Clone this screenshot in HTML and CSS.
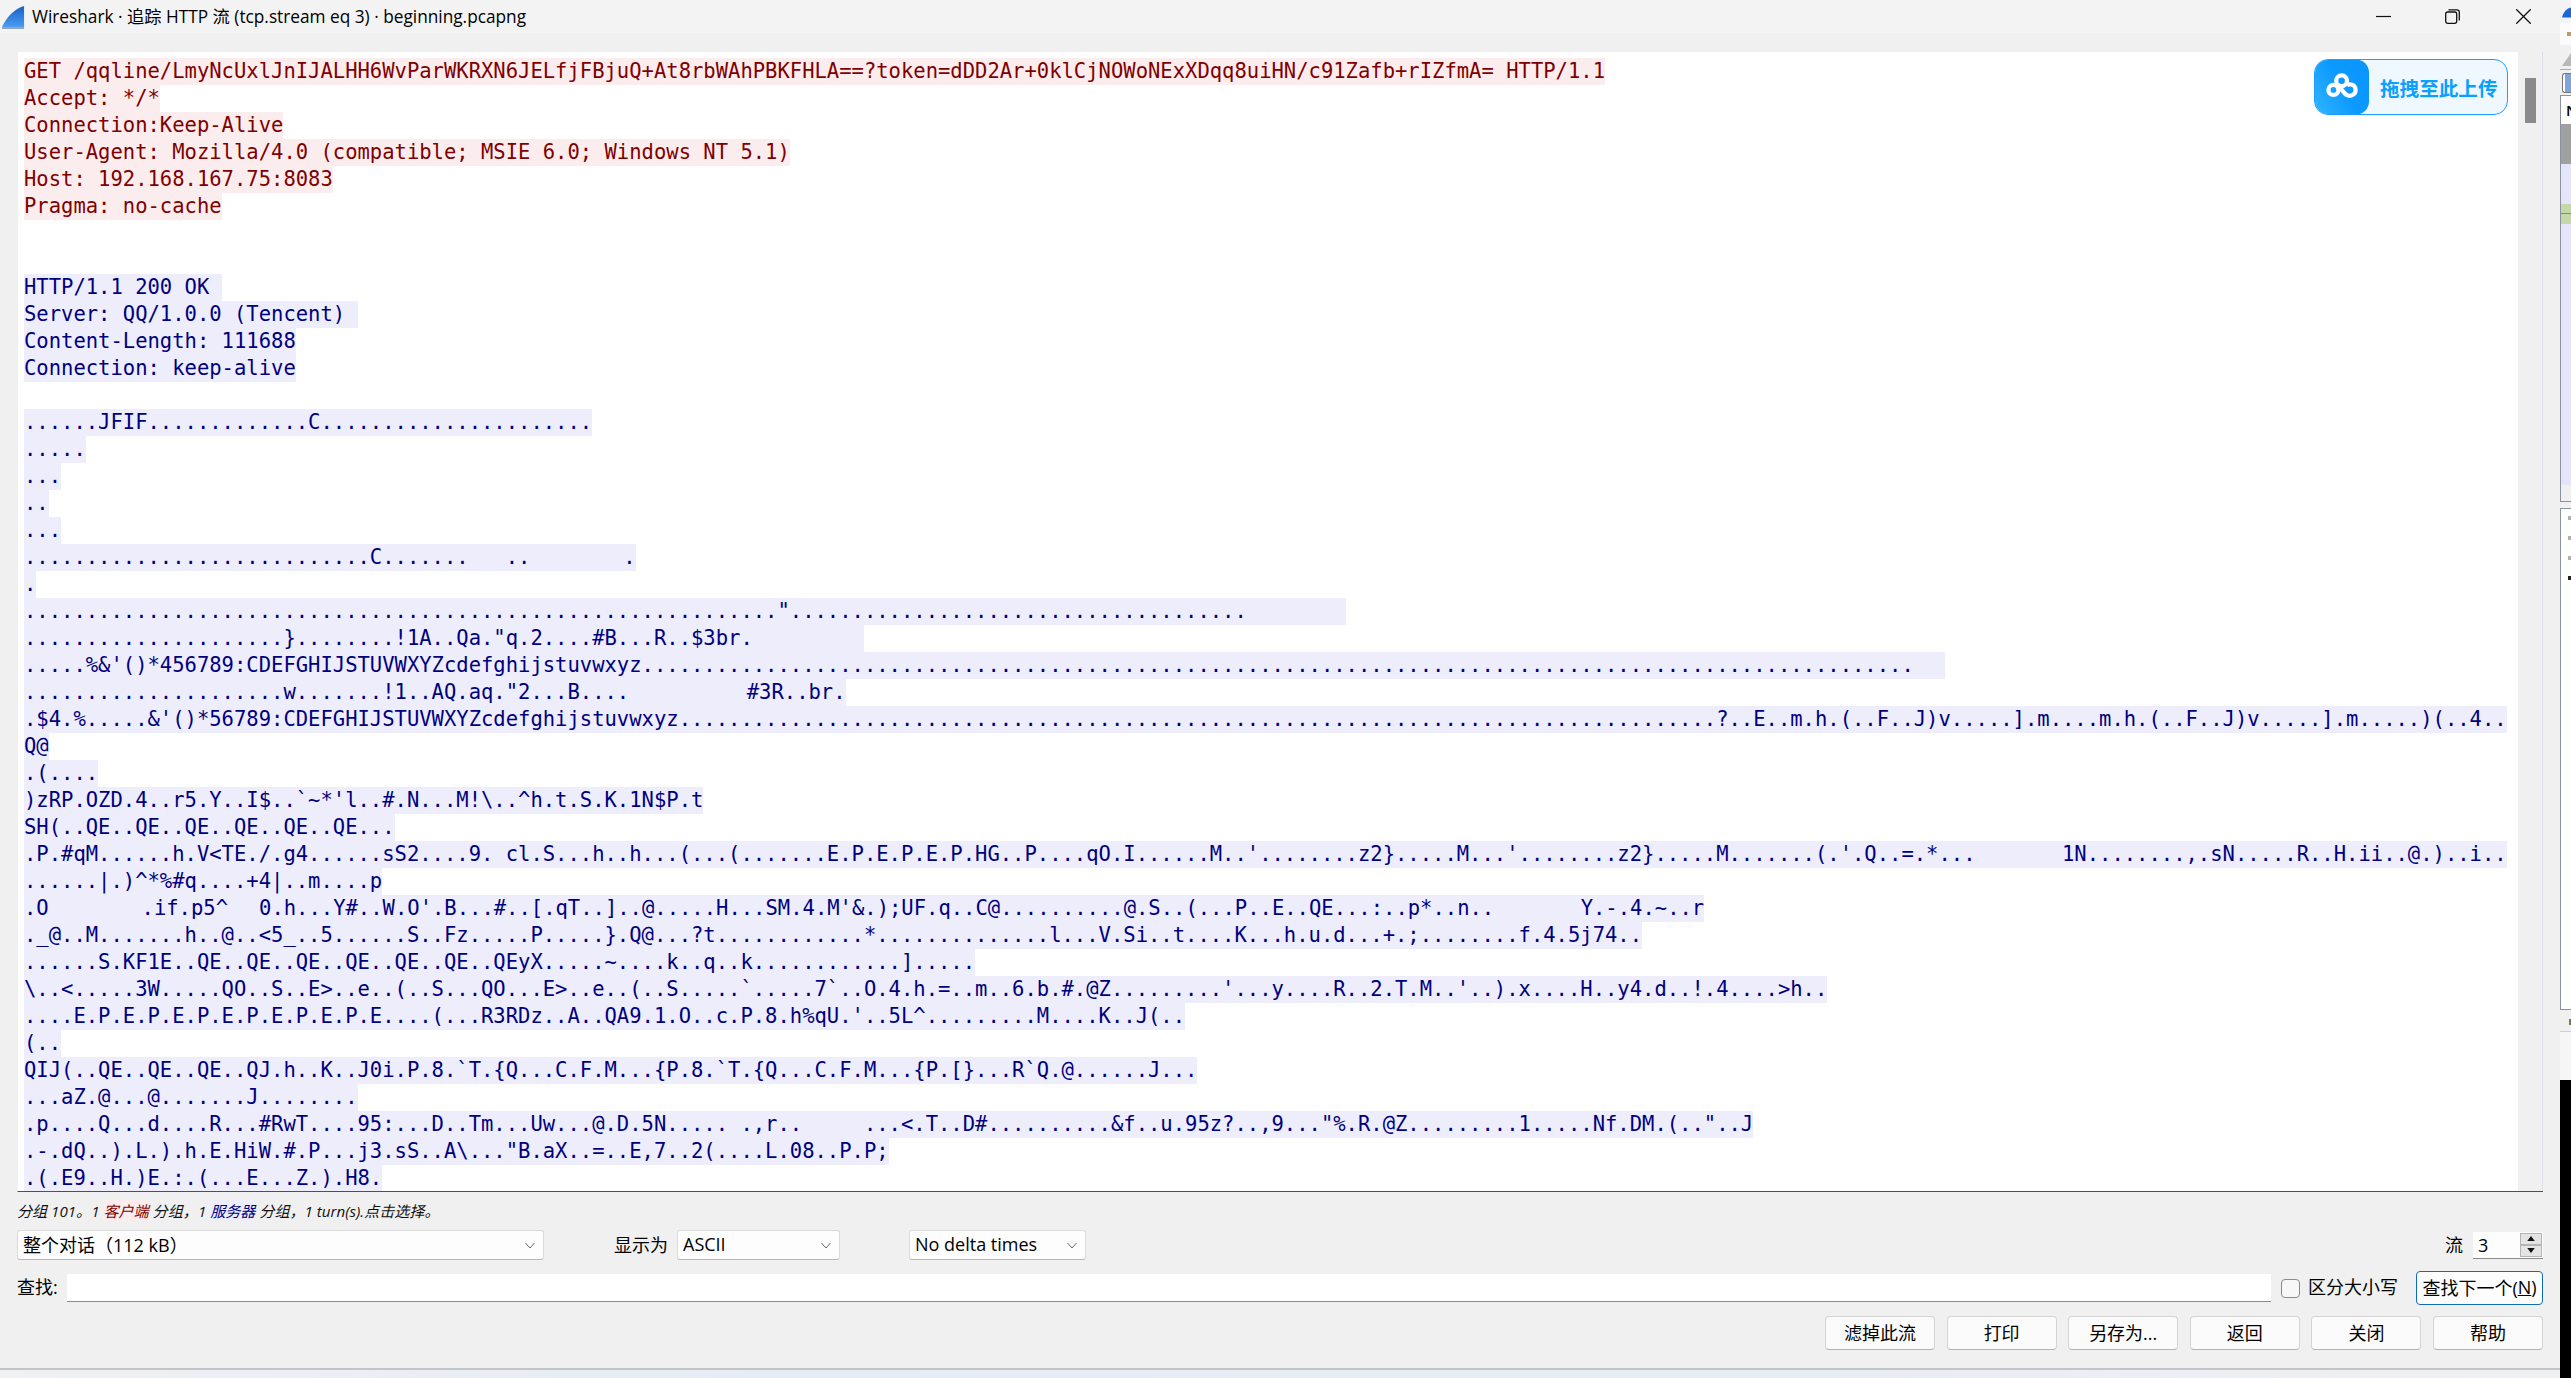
FILE: index.html
```html
<!DOCTYPE html>
<html lang="zh">
<head>
<meta charset="utf-8">
<title>Wireshark · 追踪 HTTP 流</title>
<link rel="stylesheet" href="styles.css">
</head>
<body>
<div class="desktop">
  <section class="window">
    <header class="titlebar">
      <svg class="shark" viewBox="0 0 24 24"><defs><linearGradient id="fin" x1="0" y1="0" x2="0" y2="1"><stop offset="0" stop-color="#1560c8"/><stop offset="1" stop-color="#4a9cf0"/></linearGradient></defs><path d="M23 0C13 3 5 11 0 22H23Z" fill="url(#fin)"/><path d="M0 22H23V24H0Z" fill="#8fa3b8"/></svg>
      <span class="title">Wireshark · 追踪 HTTP 流 (tcp.stream eq 3) · beginning.pcapng</span>
      <div class="controls">
        <svg class="ctl-min" viewBox="0 0 15 15"><path d="M0 7.5H15" stroke="#111" stroke-width="1.2"/></svg>
        <svg class="ctl-max" viewBox="0 0 15 15"><rect x="0.7" y="3" width="11" height="11.3" rx="2" fill="none" stroke="#111" stroke-width="1.3"/><path d="M3.5 0.8H12a2.3 2.3 0 0 1 2.3 2.3V11.5" fill="none" stroke="#111" stroke-width="1.3"/></svg>
        <svg class="ctl-close" viewBox="0 0 15 15"><path d="M0.3 0.3L14.7 14.7M14.7 0.3L0.3 14.7" stroke="#111" stroke-width="1.3"/></svg>
      </div>
    </header>
    <main class="body">
      <div class="view">
        <div class="stream">
<div class="ln c">GET /qqline/LmyNcUxlJnIJALHH6WvParWKRXN6JELfjFBjuQ+At8rbWAhPBKFHLA==?token=dDD2Ar+0klCjNOWoNExXDqq8uiHN/c91Zafb+rIZfmA= HTTP/1.1</div>
<div class="ln c">Accept: */*</div>
<div class="ln c">Connection:Keep-Alive</div>
<div class="ln c">User-Agent: Mozilla/4.0 (compatible; MSIE 6.0; Windows NT 5.1)</div>
<div class="ln c">Host: 192.168.167.75:8083</div>
<div class="ln c">Pragma: no-cache</div>
<div class="ln"></div>
<div class="ln"></div>
<div class="ln s">HTTP/1.1 200 OK </div>
<div class="ln s">Server: QQ/1.0.0 (Tencent) </div>
<div class="ln s">Content-Length: 111688</div>
<div class="ln s">Connection: keep-alive</div>
<div class="ln"></div>
<div class="ln s">......JFIF.............C......................</div>
<div class="ln s">.....</div>
<div class="ln s">...</div>
<div class="ln s">..</div>
<div class="ln s">...</div>
<div class="ln s">............................C.......   ..       <span class="hg"> </span>.</div>
<div class="ln s">.</div>
<div class="ln s">.............................................................".....................................        </div>
<div class="ln s">.....................}........!1A..Qa."q.2....#B...R..$3br.         </div>
<div class="ln s">.....%&amp;'()*456789:CDEFGHIJSTUVWXYZcdefghijstuvwxyz.......................................................................................................  <span class="hg"> </span></div>
<div class="ln s">.....................w.......!1..AQ.aq."2...B....         <span class="hg"> </span>#3R..br.</div>
<div class="ln s">.$4.%.....&amp;'()*56789:CDEFGHIJSTUVWXYZcdefghijstuvwxyz....................................................................................?..E..m.h.(..F..J)v.....].m....m.h.(..F..J)v.....].m.....)(..4..</div>
<div class="ln s">Q@</div>
<div class="ln s">.(....</div>
<div class="ln s">)zRP.OZD.4..r5.Y..I$..`~*'l..#.N...M!\..^h.t.S.K.1N$P.t</div>
<div class="ln s">SH(..QE..QE..QE..QE..QE..QE...</div>
<div class="ln s">.P.#qM......h.V&lt;TE./.g4......sS2....9. cl.S...h..h...(...(.......E.P.E.P.E.P.HG..P....qO.I......M..'........z2}.....M...'........z2}.....M.......(.'.Q..=.*...       1N........,.sN.....R..H.ii..@.)..i..</div>
<div class="ln s">......|.)^*%#q....+4|..m....p</div>
<div class="ln s">.O       <span class="hg"> </span>.if.p5^  <span class="hg"> </span>0.h...Y#..W.O'.B...#..[.qT..]..@.....H...SM.4.M'&amp;.);UF.q..C@..........@.S..(...P..E..QE...:..p*..n..       Y.-.4.~..r</div>
<div class="ln s">._@..M.......h..@..&lt;5_..5......S..Fz.....P.....}.Q@...?t............*..............l...V.Si..t....K...h.u.d...+.;........f.4.5j74..</div>
<div class="ln s">......S.KF1E..QE..QE..QE..QE..QE..QE..QEyX.....~....k..q..k............].....</div>
<div class="ln s">\..&lt;.....3W.....QO..S..E&gt;..e..(..S...QO...E&gt;..e..(..S.....`.....7`..O.4.h.=..m..6.b.#.@Z.........'...y....R..2.T.M..'..).x....H..y4.d..!.4....&gt;h..</div>
<div class="ln s">....E.P.E.P.E.P.E.P.E.P.E.P.E....(...R3RDz..A..QA9.1.O..c.P.8.h%qU.'..5L^.........M....K..J(..</div>
<div class="ln s">(..</div>
<div class="ln s">QIJ(..QE..QE..QE..QJ.h..K..J0i.P.8.`T.{Q...C.F.M...{P.8.`T.{Q...C.F.M...{P.[}...R`Q.@......J...</div>
<div class="ln s">...aZ.@...@.......J........</div>
<div class="ln s">.p....Q...d....R...#RwT....95:...D..Tm...Uw...@.D.5N..... .,r..     ...&lt;.T..D#..........&amp;f..u.95z?..,9..."%.R.@Z.........1.....Nf.DM.(.."..J</div>
<div class="ln s">.-.dQ..).L.).h.E.HiW.#.P...j3.sS..A\..."B.aX..=..E,7..2(....L.08..P.P;</div>
<div class="ln s">.(.E9..H.)E.:.(...E...Z.).H8.</div>
        </div>
        <div class="scrollbar"><div class="thumb"></div></div>
        <div class="badge">
          <svg class="badge-icon" viewBox="0 0 55 55"><defs><linearGradient id="bd" x1="0" y1="1" x2="1" y2="0.4"><stop offset="0" stop-color="#33b6ff"/><stop offset="0.6" stop-color="#0c9aff"/><stop offset="1" stop-color="#0a96ff"/></linearGradient></defs><rect width="55" height="55" rx="13" fill="url(#bd)"/><g fill="none" stroke="#fff" stroke-width="4.2"><circle cx="27.6" cy="21.2" r="5.4"/><circle cx="19.4" cy="30.4" r="5"/><path d="M24 25.5C27 28 29 33.2 32.5 35.4C37 37.8 42 34.6 41.6 29.8C41.2 25.8 36.6 23.6 33 25.6"/></g></svg>
          <span class="badge-text">拖拽至此上传</span>
        </div>
      </div>
      <div class="hint">分组 101。1 <span class="hint-c">客户端</span> 分组，1 <span class="hint-s">服务器</span> 分组，1 turn(s).点击选择。</div>
      <div class="row row-opts">
        <div class="combo combo-a"><span>整个对话（112 kB）</span><svg class="chev" viewBox="0 0 10 10"><path d="M0.5 3L5 8L9.5 3" fill="none" stroke="#666" stroke-width="1"/></svg></div>
        <span class="lbl lbl-show">显示为</span>
        <div class="combo combo-b"><span>ASCII</span><svg class="chev" viewBox="0 0 10 10"><path d="M0.5 3L5 8L9.5 3" fill="none" stroke="#666" stroke-width="1"/></svg></div>
        <div class="combo combo-c"><span>No delta times</span><svg class="chev" viewBox="0 0 10 10"><path d="M0.5 3L5 8L9.5 3" fill="none" stroke="#666" stroke-width="1"/></svg></div>
        <span class="lbl lbl-stream">流</span>
        <div class="spin"><span>3</span>
          <div class="spin-btns"><div class="spin-btn"><svg viewBox="0 0 12 8"><path d="M1.5 7H10.5L6 1Z" fill="#111"/></svg></div><div class="spin-btn"><svg viewBox="0 0 12 8"><path d="M1.5 1H10.5L6 7Z" fill="#111"/></svg></div></div>
        </div>
      </div>
      <div class="row row-find">
        <span class="lbl lbl-find">查找:</span>
        <div class="input"></div>
        <div class="check"></div>
        <span class="lbl lbl-case">区分大小写</span>
        <div class="btn btn-next">查找下一个(<u>N</u>)</div>
      </div>
      <div class="row row-btns">
        <div class="btn">滤掉此流</div>
        <div class="btn">打印</div>
        <div class="btn">另存为...</div>
        <div class="btn">返回</div>
        <div class="btn">关闭</div>
        <div class="btn">帮助</div>
      </div>
    </main>
  </section>
  <aside class="other">
    <div class="o-top"><svg viewBox="0 0 11 12"><path d="M11 0C6 1 2 5 0 12H11Z" fill="#1668d8"/></svg></div>
    <div class="o-menu"><i></i></div>
    <div class="o-gap7"></div>
    <div class="o-tool"><svg viewBox="0 0 11 15"><path d="M11 1L2 14H11Z" fill="#b8b8b8"/></svg></div>
    <div class="o-filter"><div class="o-fbox"></div></div>
    <div class="o-panel">
      <div class="o-head">N</div>
      <div class="o-grey"></div>
      <div class="o-lav1"></div>
      <div class="o-green"></div>
      <div class="o-lav2"></div>
      <div class="o-tail"></div>
    </div>
    <div class="o-gap6"></div>
    <div class="o-panel2"><b></b><b></b><b></b><b class="o-dark"></b></div>
    <div class="o-status"><i></i></div>
    <div class="o-light"></div>
    <div class="o-black"></div>
  </aside>
</div>
</body>
</html>
```
FILE: styles.css
```css
* { box-sizing: border-box; }
html, body { margin: 0; padding: 0; }
body { width: 2571px; height: 1378px; overflow: hidden; background: #eef1f4; font-family: "Open Sans", "Noto Sans CJK SC", sans-serif; font-size: 18px; color: #000; }
.desktop { position: relative; width: 2571px; height: 1378px; background: linear-gradient(90deg, #eff1f3 0, #e6ecf3 30%, #e8edf3 70%, #eff0f2 100%); }

.window { position: absolute; left: 0; top: 0; width: 2560px; height: 1370px; display: flex; flex-direction: column; background: #f0f0f0; border-bottom: 2px solid #c4c4c4; }
.titlebar { height: 33px; flex: none; display: flex; align-items: center; background: #f3f3f3; padding-left: 2px; }
.shark { width: 23px; height: 23px; margin-top: 2px; flex: none; }
.title { margin-left: 7px; padding-bottom: 2px; font-size: 17.25px; white-space: nowrap; }
.controls { margin-left: auto; display: flex; align-items: flex-start; height: 33px; padding-right: 29px; }
.controls svg { width: 15px; height: 15px; display: block; margin-top: 9px; }
.ctl-max { margin-left: 54px; }
.ctl-close { margin-left: 56px; }

.body { flex: 1; display: flex; flex-direction: column; padding: 19px 17px 0 17px; min-height: 0; }
.view { position: relative; height: 1140px; flex: none; display: flex; background: #fff; border-left: 1px solid #f0f0f0; border-bottom: 1px solid #1060a8; }
.stream { flex: 1; min-width: 0; overflow: hidden; padding: 6px 0 0 6px; font-family: "DejaVu Sans Mono", monospace; font-size: 20.52px; }
.ln { height: 27px; line-height: 27px; white-space: pre; width: fit-content; }
.hg { letter-spacing: -6px; }
.c { background: #fbeded; color: #7f0000; }
.s { background: #ededfb; color: #00007f; }
.scrollbar { width: 25px; flex: none; background: #f0f0f0; border-right: 1px solid #dcdfe3; padding: 26px 7px 0 7px; }
.thumb { width: 11px; height: 45px; background: #8a8a8a; }
.badge { position: absolute; top: 7px; right: 35px; width: 194px; height: 56px; display: flex; align-items: center; background: #eff8ff; border: 1px solid #1e9fff; border-radius: 14px; overflow: hidden; }
.badge-icon { width: 55px; height: 56px; flex: none; margin-left: -1px; }
.badge-text { margin-left: 11px; font-family: "Noto Sans CJK SC", sans-serif; font-weight: 700; font-size: 19.6px; color: #0aa0ff; white-space: nowrap; }

.hint { height: 38px; flex: none; display: flex; align-items: center; padding-bottom: 3px; font-style: italic; font-size: 15.1px; white-space: pre; color: #111; }
.hint-c { background: #fbeded; color: #7f0000; }
.hint-s { background: #ededfb; color: #00007f; }

.row { display: flex; flex: none; align-items: center; }
.row-opts { height: 30px; }
.row-find { height: 34px; margin-top: 11px; }
.row-btns { height: 34px; margin-top: 11px; justify-content: flex-end; gap: 11.6px; }
.combo { height: 30px; display: flex; align-items: center; justify-content: space-between; background: #fdfdfd; border: 1px solid #dadada; border-bottom-color: #b8b8b8; border-radius: 3px; padding: 0 8px 2px 5px; white-space: nowrap; }
.combo-a { width: 527px; }
.combo-b { width: 163px; }
.combo-c { width: 177px; margin-left: 69px; }
.chev { width: 10px; height: 10px; flex: none; margin-top: 2px; }
.lbl { white-space: nowrap; padding-bottom: 2px; }
.lbl-show { margin-left: 70px; margin-right: 9px; }
.lbl-stream { margin-left: auto; margin-right: 10px; }
.spin { width: 70px; height: 27px; display: flex; align-items: center; justify-content: space-between; background: #fdfdfd; border-bottom: 1px solid #8a8a8a; padding: 0 1px 0 5px; }
.spin-btns { width: 22px; display: flex; flex-direction: column; }
.spin-btn { height: 12px; background: #e4e4e4; border: 1px solid #b4b4b4; display: flex; align-items: center; justify-content: center; }
.spin-btn svg { width: 10px; height: 7px; display: block; }
.lbl-find { width: 50px; padding-bottom: 4px; }
.input { flex: 1; height: 28px; background: #fff; border-bottom: 1px solid #8a8a8a; }
.check { width: 19px; height: 19px; margin-left: 10px; background: #f7f7f7; border: 1px solid #8a8a8a; border-radius: 4px; }
.lbl-case { margin-left: 8px; margin-right: 18px; padding-bottom: 4px; }
.btn { width: 110px; height: 34px; display: flex; align-items: center; justify-content: center; padding-bottom: 2px; background: #fbfbfb; border: 1px solid #d4d4d4; border-bottom-color: #b4b4b4; border-radius: 4px; white-space: nowrap; }
.btn-next { width: 127px; border: 1px solid #0f6cbd; background: #fdfdfd; }

.other { position: absolute; left: 2560px; top: 0; width: 11px; height: 1378px; display: flex; flex-direction: column; background: #f0f0f0; overflow: hidden; }
.o-top { height: 23px; background: #f3f3f3; padding: 7px 0 0 2px; }
.o-top svg { width: 9px; height: 11px; display: block; }
.o-menu { height: 22px; background: #fbfbfb; padding: 9px 0 0 7px; }
.o-menu i { display: block; width: 4px; height: 4px; background: #c89a60; }
.o-gap7 { height: 7px; }
.o-tool { height: 18px; border-bottom: 1px solid #aaa; }
.o-tool svg { width: 11px; height: 15px; display: block; }
.o-filter { height: 25px; padding-top: 3px; }
.o-fbox { height: 20px; margin-left: 2px; background: linear-gradient(90deg, #fff 0 2px, #7fa6dc 2px); border: 1px solid #777; border-right: 0; border-radius: 3px 0 0 3px; }
.o-panel { height: 407px; display: flex; flex-direction: column; border-left: 1px solid #8a92a0; border-top: 1px solid #8a92a0; border-bottom: 1px solid #8a92a0; }
.o-head { height: 28px; background: #fff; padding-left: 5px; font-size: 15px; line-height: 28px; color: #000; font-weight: 600; }
.o-grey { height: 40px; background: #a0a0a0; }
.o-lav1 { height: 40px; background: #e4e4fb; }
.o-green { height: 20px; background: linear-gradient(#c5d9a8 0 9px, #7f8f70 9px 10px, #c5d9a8 10px); }
.o-lav2 { height: 261px; background: #e4e4fb; }
.o-tail { flex: 1; background: #f0f0f0; }
.o-gap6 { height: 6px; }
.o-panel2 { height: 502px; background: #fff; border: 1px solid #8a92a0; border-right: 0; padding: 7px 0 0 7px; display: flex; flex-direction: column; gap: 16px; }
.o-panel2 b { display: block; width: 4px; height: 4px; background: #b0b0b0; }
.o-panel2 .o-dark { background: #222; }
.o-status { height: 22px; border-bottom: 1px solid #d0d0d0; padding: 9px 0 0 9px; }
.o-status i { display: block; width: 2px; height: 6px; background: #7a7a40; }
.o-light { height: 48px; background: #f6f6f6; }
.o-black { flex: 1; background: #000; }
```
